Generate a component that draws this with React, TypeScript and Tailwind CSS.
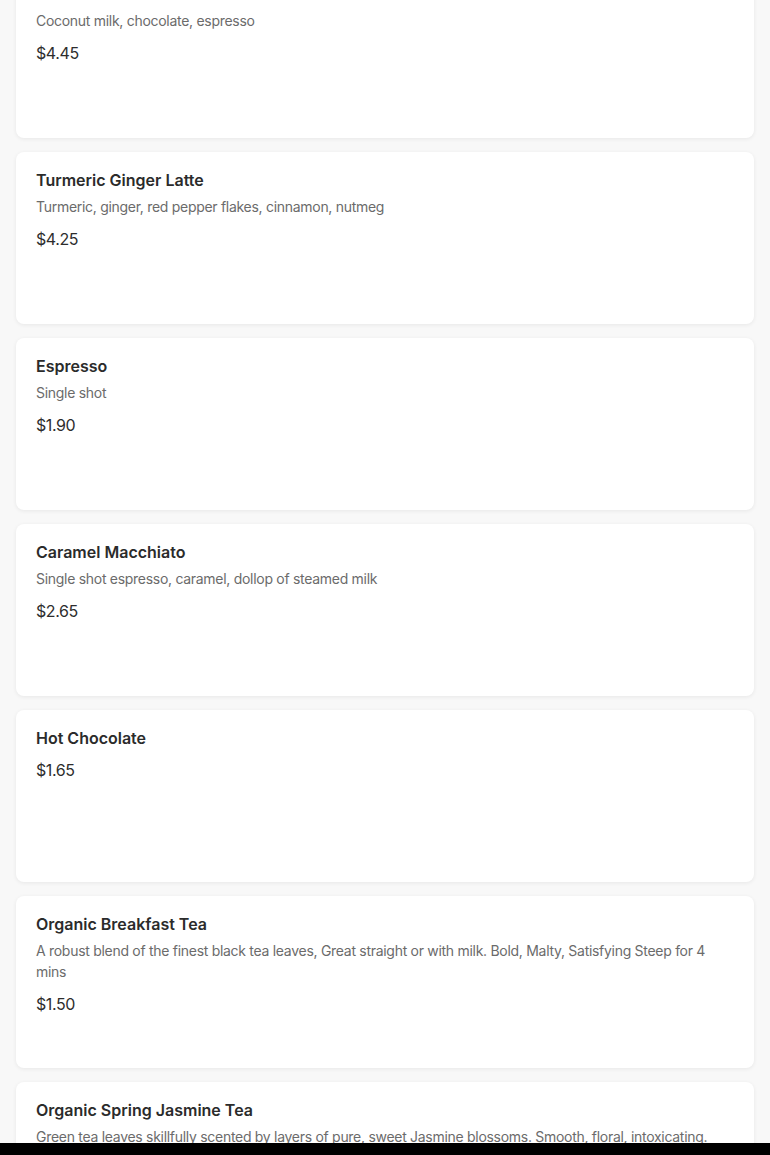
const items: { name: string; description?: string; price: string }[] = [
  { name: 'Coconut Milk Mocha Latte', description: 'Coconut milk, chocolate, espresso', price: '$4.45' },
  { name: 'Turmeric Ginger Latte', description: 'Turmeric, ginger, red pepper flakes, cinnamon, nutmeg', price: '$4.25' },
  { name: 'Espresso', description: 'Single shot', price: '$1.90' },
  { name: 'Caramel Macchiato', description: 'Single shot espresso, caramel, dollop of steamed milk', price: '$2.65' },
  { name: 'Hot Chocolate', price: '$1.65' },
  {
    name: 'Organic Breakfast Tea',
    description:
      'A robust blend of the finest black tea leaves, Great straight or with milk. Bold, Malty, Satisfying Steep for 4 mins',
    price: '$1.50',
  },
  {
    name: 'Organic Spring Jasmine Tea',
    description:
      'Green tea leaves skillfully scented by layers of pure, sweet Jasmine blossoms. Smooth, floral, intoxicating. Steep for 3 mins',
    price: '$1.50',
  },
];

function MenuCard({ name, description, price }: { name: string; description?: string; price: string }) {
  return (
    <div className="h-[172px] shrink-0 rounded-lg bg-white px-5 pt-[18px] shadow-[0_1px_4px_rgba(0,0,0,0.07)]">
      <h3 className="text-base leading-5 font-semibold text-[#2b2b2b]">{name}</h3>
      {description && (
        <p className="mt-[6px] text-sm leading-[21px] tracking-[-0.29px] text-[#6b6b6b]">{description}</p>
      )}
      <div className="mt-[10px] text-base leading-6 tracking-[-0.4px] text-[#2d2d2d]">{price}</div>
    </div>
  );
}

export default function App() {
  return (
    <div
      className="flex h-[1155px] w-full flex-col overflow-hidden bg-[#f8f8f8]"
      style={{ fontFamily: 'Inter, "Noto Sans", sans-serif' }}
    >
      <div className="flex-1 overflow-hidden px-4">
        {/* menu list, scrolled part way down */}
        <div className="-mt-[34px] flex flex-col gap-[14px]">
          {items.map((item) => (
            <MenuCard key={item.name} {...item} />
          ))}
        </div>
      </div>
      <div className="h-3 shrink-0 bg-black" />
    </div>
  );
}
